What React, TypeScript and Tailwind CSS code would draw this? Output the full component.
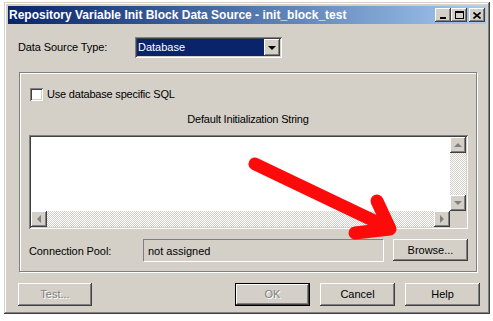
import React from 'react';

const font = { fontFamily: '"Liberation Sans", Arial, sans-serif' };

const raised = 'bg-[#d4d0c8] shadow-[inset_-1px_-1px_#404040,inset_1px_1px_#ffffff,inset_-2px_-2px_#808080,inset_2px_2px_#d4d0c8]';
const sunken = 'shadow-[inset_1px_1px_#808080,inset_-1px_-1px_#ffffff,inset_2px_2px_#404040,inset_-2px_-2px_#d4d0c8]';
const track = 'bg-[repeating-conic-gradient(#d4d0c8_0_25%,#ffffff_0_50%)] bg-[length:2px_2px]';

function Tri({ dir, color = '#808080' }: { dir: 'up' | 'down' | 'left' | 'right'; color?: string }) {
    const pts = {
        up: '4,1 0,5 8,5',
        down: '0,1 8,1 4,5',
        left: '5,0 5,8 1,4',
        right: '1,0 1,8 5,4',
    }[dir];
    const horiz = dir === 'left' || dir === 'right';
    return (
        <svg width={horiz ? 6 : 8} height={horiz ? 8 : 6} viewBox={horiz ? '0 0 6 8' : '0 0 8 6'}>
            <polygon points={pts} fill={color} />
        </svg>
    );
}

function ScrollBtn({ dir }: { dir: 'up' | 'down' | 'left' | 'right' }) {
    return (
        <div className={`w-[16px] h-[16px] flex items-center justify-center shrink-0 ${raised}`}>
            <Tri dir={dir} />
        </div>
    );
}

function Button({ label, w = 'w-[75px]', h = 'h-[23px]', disabled, isDefault }: { label: string; w?: string; h?: string; disabled?: boolean; isDefault?: boolean }) {
    return (
        <div className={`${w} ${h} flex items-center justify-center text-[11px] ${isDefault ? 'border border-black' : ''} ${raised} ${disabled ? 'text-[#808080] [text-shadow:1px_1px_#ffffff]' : 'text-black'}`}>
            {label}
        </div>
    );
}

function TitleButton({ children }: { children: React.ReactNode }) {
    return (
        <div className={`w-[16px] h-[14px] flex items-center justify-center ${raised}`}>
            {children}
        </div>
    );
}

export default function App() {
    return (
        <div className="relative w-[493px] h-[321px] bg-white overflow-hidden pt-[2px] pl-[4px]" style={font}>
            <div className="w-[486px] h-[312px] p-[4px] bg-[#d4d0c8] shadow-[inset_-1px_-1px_#404040,inset_1px_1px_#d4d0c8,inset_-2px_-2px_#808080,inset_2px_2px_#ffffff] flex flex-col">
                {/* title bar */}
                <div className="h-[18px] w-[478px] bg-gradient-to-r from-[#0a246a] to-[#a6caf0] flex items-center pl-[1px] pr-[1px]">
                    <span className="text-white font-bold text-[12px] leading-[14px] flex-1 whitespace-nowrap">Repository Variable Init Block Data Source - init_block_test</span>
                    <div className="flex">
                        <TitleButton>
                            <div className="w-[6px] h-[2px] bg-black mt-[6px] -ml-[1px]" />
                        </TitleButton>
                        <TitleButton>
                            <div className="w-[9px] h-[8px] border border-black border-t-2" />
                        </TitleButton>
                        <div className="w-[2px]" />
                        <TitleButton>
                            <svg width="8" height="7" viewBox="0 0 8 7">
                                <path d="M0.5 0.5 L7.5 6.5 M7.5 0.5 L0.5 6.5" stroke="#000" strokeWidth="1.6" />
                            </svg>
                        </TitleButton>
                    </div>
                </div>

                {/* data source row */}
                <div className="flex items-center mt-[13px] h-[21px] pl-[10px]">
                    <span className="w-[117px] text-[11px] leading-[13px] tracking-[-0.1px] text-black">Data Source Type:</span>
                    <div className={`w-[147px] h-[21px] bg-white p-[2px] flex ${sunken}`}>
                        <div className="flex-1 bg-[#0a246a] text-white text-[11px] leading-[17px] pl-[1px]">Database</div>
                        <div className={`w-[16px] h-[17px] flex items-center justify-center ${raised}`}>
                            <Tri dir="down" color="#000" />
                        </div>
                    </div>
                </div>

                {/* group box */}
                <div className="ml-[11px] mt-[14px] w-[458px] h-[200px] border border-[#808080] shadow-[inset_1px_1px_#ffffff,1px_1px_#ffffff] flex flex-col">
                    <div className="flex items-center mt-[15px] h-[13px] pl-[10px]">
                        <div className={`w-[13px] h-[13px] bg-white ${sunken}`} />
                        <span className="ml-[4px] text-[11px] leading-[13px] tracking-[-0.2px] text-black">Use database specific SQL</span>
                    </div>
                    <div className="mt-[12px] text-center text-[11px] leading-[13px] tracking-[-0.2px] text-black">Default Initialization String</div>

                    <div className={`ml-[9px] mt-[9px] w-[439px] h-[94px] p-[2px] bg-white ${sunken}`}>
                        <div className="flex h-full">
                            <div className="flex-1 flex flex-col">
                                <div className="flex-1 bg-white" />
                                <div className={`h-[16px] flex ${track}`}>
                                    <ScrollBtn dir="left" />
                                    <div className="flex-1" />
                                    <ScrollBtn dir="right" />
                                </div>
                            </div>
                            <div className="w-[16px] flex flex-col">
                                <ScrollBtn dir="up" />
                                <div className={`flex-1 ${track}`} />
                                <ScrollBtn dir="down" />
                                <div className="h-[16px] bg-[#d4d0c8]" />
                            </div>
                        </div>
                    </div>

                    <div className="flex items-center mt-[10px] pl-[9px]">
                        <span className="w-[114px] text-[11px] leading-[13px] tracking-[-0.1px] text-black mt-[3px]">Connection Pool:</span>
                        <div className="w-[240px] h-[22px] border-t border-l border-[#808080] shadow-[1px_1px_#ffffff] text-[11px] leading-[13px] text-black pl-[4px] pt-[5px]">not assigned</div>
                        <div className="ml-[10px]">
                            <Button label="Browse..." h="h-[22px]" />
                        </div>
                    </div>
                </div>

                {/* bottom buttons */}
                <div className="flex mt-[11px] pl-[10px]">
                    <Button label="Test..." w="w-[74px]" disabled />
                    <div className="flex-1" />
                    <div className="flex gap-[10px] mr-[6px]">
                        <Button label="OK" disabled isDefault />
                        <Button label="Cancel" />
                        <Button label="Help" />
                    </div>
                </div>
            </div>

            {/* red annotation arrow */}
            <svg className="absolute left-0 top-0 pointer-events-none" width="493" height="321" viewBox="0 0 493 321">
                <g stroke="#ff0a0a" strokeWidth="13" strokeLinecap="round" strokeLinejoin="round" fill="none">
                    <path d="M255 164 L389 228" />
                    <path d="M377 201 L390 229 L355 233" />
                </g>
            </svg>
        </div>
    );
}
